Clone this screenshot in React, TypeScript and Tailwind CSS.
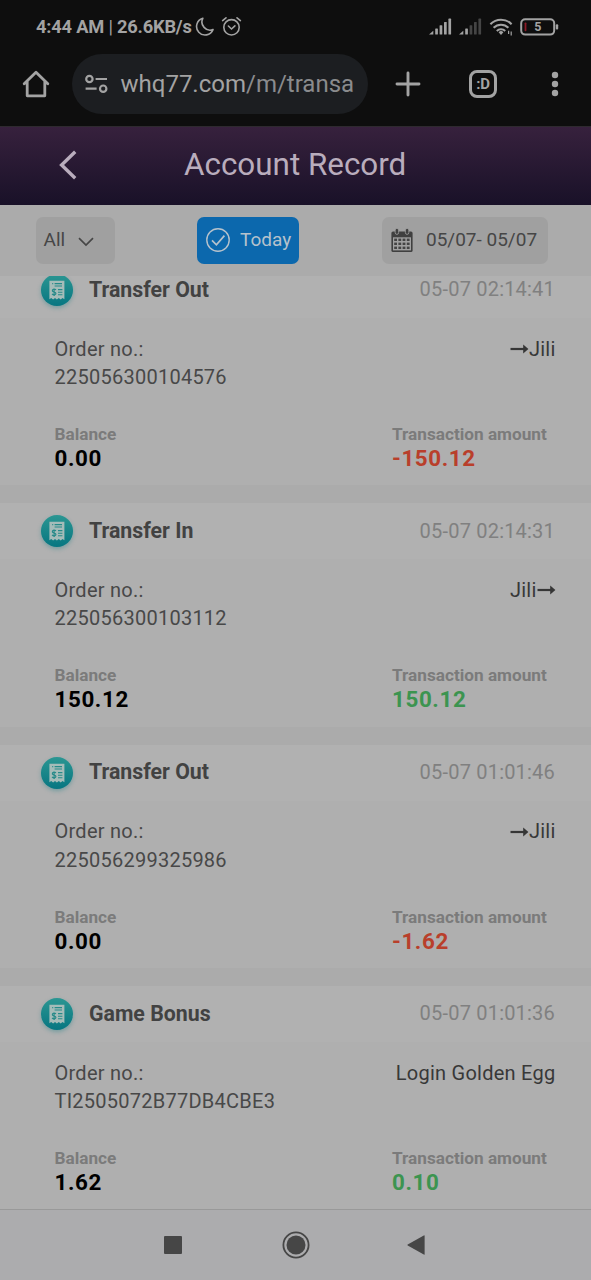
type RecordItem = {
  title: string;
  time: string;
  order: string;
  note: string;
  arrow?: "left" | "right";
  balance: string;
  amount: string;
};

const records: RecordItem[] = [
  { title: "Transfer Out", time: "05-07 02:14:41", order: "225056300104576", note: "Jili", arrow: "left", balance: "0.00", amount: "-150.12" },
  { title: "Transfer In", time: "05-07 02:14:31", order: "225056300103112", note: "Jili", arrow: "right", balance: "150.12", amount: "150.12" },
  { title: "Transfer Out", time: "05-07 01:01:46", order: "225056299325986", note: "Jili", arrow: "left", balance: "0.00", amount: "-1.62" },
  { title: "Game Bonus", time: "05-07 01:01:36", order: "TI2505072B77DB4CBE3", note: "Login Golden Egg", balance: "1.62", amount: "0.10" },
];

function Signal({ active }: { active: number }) {
  return (
    <svg width="23" height="17" viewBox="0 0 23 17">
      <path d="M0 16.5 L4.3 12.8 V16.5Z" fill="#a3a3a3" />
      {[0, 1, 2, 3].map((i) => (
        <rect key={i} x={6.2 + i * 4.4} y={10.5 - i * 3.3} width="2.7" height={6 + i * 3.3} rx="0.6" fill={i + 1 < active ? "#a3a3a3" : "#454545"} />
      ))}
    </svg>
  );
}

function StatusBar() {
  return (
    <div className="flex h-[53px] items-center pl-[36px] pr-[32px] text-[#a3a3a3]">
      <span className="w-[158px] whitespace-nowrap pt-px text-[18.3px] font-bold leading-none tracking-[-0.2px]">
        4:44 AM <span className="font-normal">|</span> 26.6KB/s
      </span>
      <svg className="ml-[1px]" width="20" height="20" viewBox="0 0 20 20" fill="none" stroke="currentColor" strokeWidth="1.6" strokeLinejoin="round">
        <path d="M7.8 1.3 A8.5 8.5 0 1 0 18 12.6 A8.2 8.2 0 0 1 7.8 1.3Z" />
      </svg>
      <svg className="ml-[6px]" width="21" height="21" viewBox="0 0 21 21" fill="none" stroke="currentColor" strokeWidth="1.6" strokeLinecap="round">
        <circle cx="10.5" cy="11.3" r="7.7" />
        <path d="M1.6 4.6 L5 1.8 M19.4 4.6 L16 1.8 M7.4 10 L10.5 13 L13.9 9.8" />
      </svg>
      <div className="ml-auto flex items-center">
        <Signal active={5} />
        <span className="w-[7px]" />
        <Signal active={2} />
        <svg className="ml-[7px]" width="25" height="20" viewBox="0 0 25 20" fill="none" stroke="currentColor" strokeWidth="2.1">
          <path d="M1.4 7.2 A15 15 0 0 1 22.6 7.2 M4.6 10.8 A10.5 10.5 0 0 1 19.4 10.8 M7.8 14 A6 6 0 0 1 16.2 14" />
          <path d="M9.6 15.2 L12 18 L14.4 15.2 A3.5 3.5 0 0 0 9.6 15.2Z" fill="currentColor" stroke="none" />
          <path d="M19.6 13.7 V17 M22.2 14.6 V18.6" strokeWidth="1.2" />
        </svg>
        <svg className="ml-[6px]" width="39" height="18" viewBox="0 0 39 18">
          <rect x="1.2" y="1.2" width="33" height="15.4" rx="4" fill="none" stroke="#a3a3a3" strokeWidth="2" />
          <rect x="35.8" y="6.2" width="2.4" height="5.4" rx="1" fill="#a3a3a3" />
          <rect x="4.6" y="4.5" width="1.8" height="8.8" rx="0.8" fill="#8d1b27" />
          <text x="17.8" y="13.4" fontFamily="Roboto, sans-serif" fontSize="12.5" fontWeight="700" textAnchor="middle" fill="#a3a3a3">5</text>
        </svg>
      </div>
    </div>
  );
}

function BrowserBar() {
  return (
    <div className="flex h-[73px] items-start pl-[22px] pt-[1px] text-[#a3a3a3]">
      <svg className="mt-[15px]" width="28" height="30" viewBox="0 0 28 30" fill="none" stroke="currentColor" strokeWidth="2.8" strokeLinejoin="round" strokeLinecap="round">
        <path d="M2.2 14.8 L14 3.2 L25.8 14.8 M5.2 12.5 V26.8 H22.8 V12.5" />
      </svg>
      <div className="ml-[22px] flex h-[60px] w-[296px] items-center rounded-full bg-[#1c1e21] pl-[12px]">
        <svg width="24" height="20" viewBox="0 0 24 20" fill="none" stroke="currentColor" strokeWidth="2.2">
          <circle cx="5.4" cy="5" r="3.2" />
          <path d="M11.6 5 H23 M1.6 14.7 H12.6" />
          <circle cx="19.2" cy="14.7" r="3.2" />
        </svg>
        <span className="ml-[12.5px] whitespace-nowrap text-[24px] leading-none">
          whq77.com<span className="text-[#8a8b8d]">/m/transa</span>
        </span>
      </div>
      <svg className="ml-[27px] mt-[17px]" width="26" height="26" viewBox="0 0 26 26" stroke="currentColor" strokeWidth="2.9" strokeLinecap="round">
        <path d="M13 2 V24 M2 13 H24" />
      </svg>
      <div className="ml-[48px] mt-[16px] flex h-[28px] w-[28px] items-center justify-center rounded-[8px] border-[3px] border-[#a3a3a3] text-[15px] font-bold leading-none tracking-[-0.3px]">
        :D
      </div>
      <svg className="ml-[54px] mt-[17px]" width="8" height="26" viewBox="0 0 8 26" fill="currentColor">
        <circle cx="4" cy="4" r="3.2" />
        <circle cx="4" cy="13" r="3.2" />
        <circle cx="4" cy="22" r="3.2" />
      </svg>
    </div>
  );
}

function ReceiptIcon() {
  return (
    <svg className="shrink-0 overflow-visible drop-shadow-[0_2px_2px_rgba(10,120,130,0.35)]" width="32" height="32" viewBox="0 0 32 32">
      <defs>
        <linearGradient id="teal" x1="0" y1="0" x2="0" y2="1">
          <stop offset="0" stopColor="#2b9692" />
          <stop offset="1" stopColor="#077681" />
        </linearGradient>
      </defs>
      <circle cx="16" cy="16" r="16" fill="url(#teal)" />
      <path d="M8.4 6.8 H23.4 V25.2 L21.5 24 L19.7 25.6 L17.8 24 L15.9 25.6 L14 24 L12.1 25.6 L10.2 24 L8.4 25.2Z" fill="#a5bcb9" />
      <path d="M11.2 9.6 H12.2 M13.6 9.6 H21 M13.6 12 H21 M17 15.6 H21.4 M17 18.2 H21.4 M17 20.8 H21.4" stroke="#278a89" strokeWidth="1.1" />
      <path d="M15 15.8 C13 14.5 11.2 15.3 11.4 16.8 C11.7 18.4 14.8 17.6 14.9 19.4 C15 21 12.6 21.3 11 20.1 M13.1 14.4 V22" fill="none" stroke="#278a89" strokeWidth="1.2" />
    </svg>
  );
}

function Arrow() {
  return (
    <svg width="19" height="12" viewBox="0 0 19 12">
      <path d="M0.5 6 H15" stroke="#363636" strokeWidth="2.2" />
      <path d="M13.2 1.6 L18.4 6 L13.2 10.4Z" fill="#363636" />
    </svg>
  );
}

function RecordCard({ item }: { item: RecordItem }) {
  const negative = item.amount.startsWith("-");
  return (
    <article className="h-[223.4px] shrink-0 bg-[#afafaf]">
      <header className="flex h-[56px] items-center bg-[#b1b1b1] pl-[41px] pr-[36px]">
        <ReceiptIcon />
        <h2 className="ml-[16px] pb-[1.5px] text-[21.3px] font-bold leading-none text-[#424242]">{item.title}</h2>
        <time className="ml-auto pb-[1.5px] text-[20px] leading-none tracking-[0.2px] text-[#808080]">{item.time}</time>
      </header>
      <div className="flex justify-between pl-[54.5px] pr-[35.5px] pt-[16.5px] text-[20px] leading-[28.5px] tracking-[0.25px] text-[#484848]">
        <p>
          Order no.:
          <br />
          {item.order}
        </p>
        <p className="flex h-[28.5px] items-center text-[#383838]">
          {item.arrow === "left" && <Arrow />}
          {item.note}
          {item.arrow === "right" && <Arrow />}
        </p>
      </div>
      <div className="flex pl-[54.5px] pt-[30.5px] font-bold">
        <div className="w-[337.5px]">
          <div className="text-[17.2px] leading-[24px] text-[#7b7b7b]">Balance</div>
          <div className="text-[22.4px] leading-[25px] tracking-[0.6px] text-black">{item.balance}</div>
        </div>
        <div>
          <div className="text-[17.2px] leading-[24px] text-[#7b7b7b]">Transaction amount</div>
          <div className={negative ? "text-[22.4px] leading-[25px] tracking-[0.6px] text-[#b93f2b]" : "text-[22.4px] leading-[25px] tracking-[0.6px] text-[#3c9450]"}>{item.amount}</div>
        </div>
      </div>
    </article>
  );
}

function CalendarIcon() {
  return (
    <svg width="22" height="25" viewBox="0 0 22 25">
      <path d="M2 3.5 H20 Q21.6 3.5 21.6 5 V22.5 Q21.6 24 20 24 H2 Q0.4 24 0.4 22.5 V5 Q0.4 3.5 2 3.5Z" fill="#404040" />
      <path d="M2 9.3 H20 V22.4 H2Z" fill="#a0a0a0" />
      <rect x="4.2" y="0.4" width="3.4" height="6" rx="1.7" fill="#404040" stroke="#a0a0a0" strokeWidth="0.8" />
      <rect x="14.4" y="0.4" width="3.4" height="6" rx="1.7" fill="#404040" stroke="#a0a0a0" strokeWidth="0.8" />
      {[10.6, 14.6, 18.6].map((y) =>
        [3.2, 7.4, 11.6, 15.8].map((x) => <rect key={`${x}-${y}`} x={x} y={y} width="2.8" height="2.4" fill="#444" />),
      )}
    </svg>
  );
}

function Filters() {
  return (
    <div className="flex h-[71px] shrink-0 items-start bg-[#ababab] pl-[36px] pt-[12px] text-[19px] leading-none text-[#464646]">
      <button className="flex h-[47px] w-[79px] items-center rounded-[7px] bg-[#a0a0a0] pl-[7.5px]">
        <span className="w-[34px] pb-[2px] text-left">All</span>
        <svg className="mt-[2px]" width="16" height="10" viewBox="0 0 16 10" fill="none" stroke="currentColor" strokeWidth="1.7">
          <path d="M1 1.2 L8 8 L15 1.2" />
        </svg>
      </button>
      <button className="ml-[82px] flex h-[47px] w-[102px] items-center rounded-[7px] bg-[#0c68ad] pl-[9px] text-[#b6c2cc]">
        <svg className="-mt-px" width="24" height="24" viewBox="0 0 24 24" fill="none" stroke="currentColor" strokeWidth="1.4">
          <circle cx="12" cy="12" r="11.2" />
          <path d="M6 12.4 L10.4 16.8 L18.4 7.6" strokeWidth="1.7" />
        </svg>
        <span className="ml-[10px] pb-[2px]">Today</span>
      </button>
      <button className="ml-[83px] flex h-[47px] w-[166px] items-center rounded-[7px] bg-[#a0a0a0] pl-[9px]">
        <span className="-mt-px"><CalendarIcon /></span>
        <span className="ml-[13px] whitespace-nowrap pb-[2px]">05/07- 05/07</span>
      </button>
    </div>
  );
}

export default function App() {
  return (
    <main className="flex h-[1280px] w-[591px] flex-col overflow-hidden bg-[#0e0e0e] font-[Roboto,sans-serif]">
      <StatusBar />
      <BrowserBar />
      <header className="flex h-[79px] shrink-0 items-center border-t border-[#2e2a2f] bg-linear-to-b from-[#37213d] to-[#191128] pb-[3px] pl-[58px] text-[#b9adbd]">
        <svg width="19" height="30" viewBox="0 0 19 30" fill="none" stroke="currentColor" strokeWidth="3.4">
          <path d="M17.2 1.8 L3.6 15 L17.2 28.2" />
        </svg>
        <h1 className="ml-[107px] whitespace-nowrap text-[31.4px] leading-none">Account Record</h1>
      </header>
      <Filters />
      <section className="flex min-h-0 flex-1 flex-col gap-[18px] overflow-hidden bg-[#ababab]">
        <div className="-mt-[14px] flex flex-col gap-[18px]">
          {records.map((item) => (
            <RecordCard key={item.time} item={item} />
          ))}
        </div>
      </section>
      <nav className="flex h-[71px] shrink-0 items-center border-t border-[#999999] bg-[#acacae] pl-[164px] text-[#464646]">
        <div className="h-[18px] w-[18px] rounded-[1px] bg-[#464646]" />
        <svg className="ml-[100px]" width="28" height="28" viewBox="0 0 28 28">
          <circle cx="14" cy="14" r="12.6" fill="none" stroke="currentColor" strokeWidth="1.8" />
          <circle cx="14" cy="14" r="9.5" fill="currentColor" />
        </svg>
        <svg className="ml-[97px]" width="18" height="20" viewBox="0 0 18 20">
          <path d="M17.6 0.8 V19.2 Q17.6 20 16.8 19.6 L0.7 10.6 Q0 10 0.7 9.4 L16.8 0.4 Q17.6 0 17.6 0.8Z" fill="currentColor" />
        </svg>
      </nav>
    </main>
  );
}
